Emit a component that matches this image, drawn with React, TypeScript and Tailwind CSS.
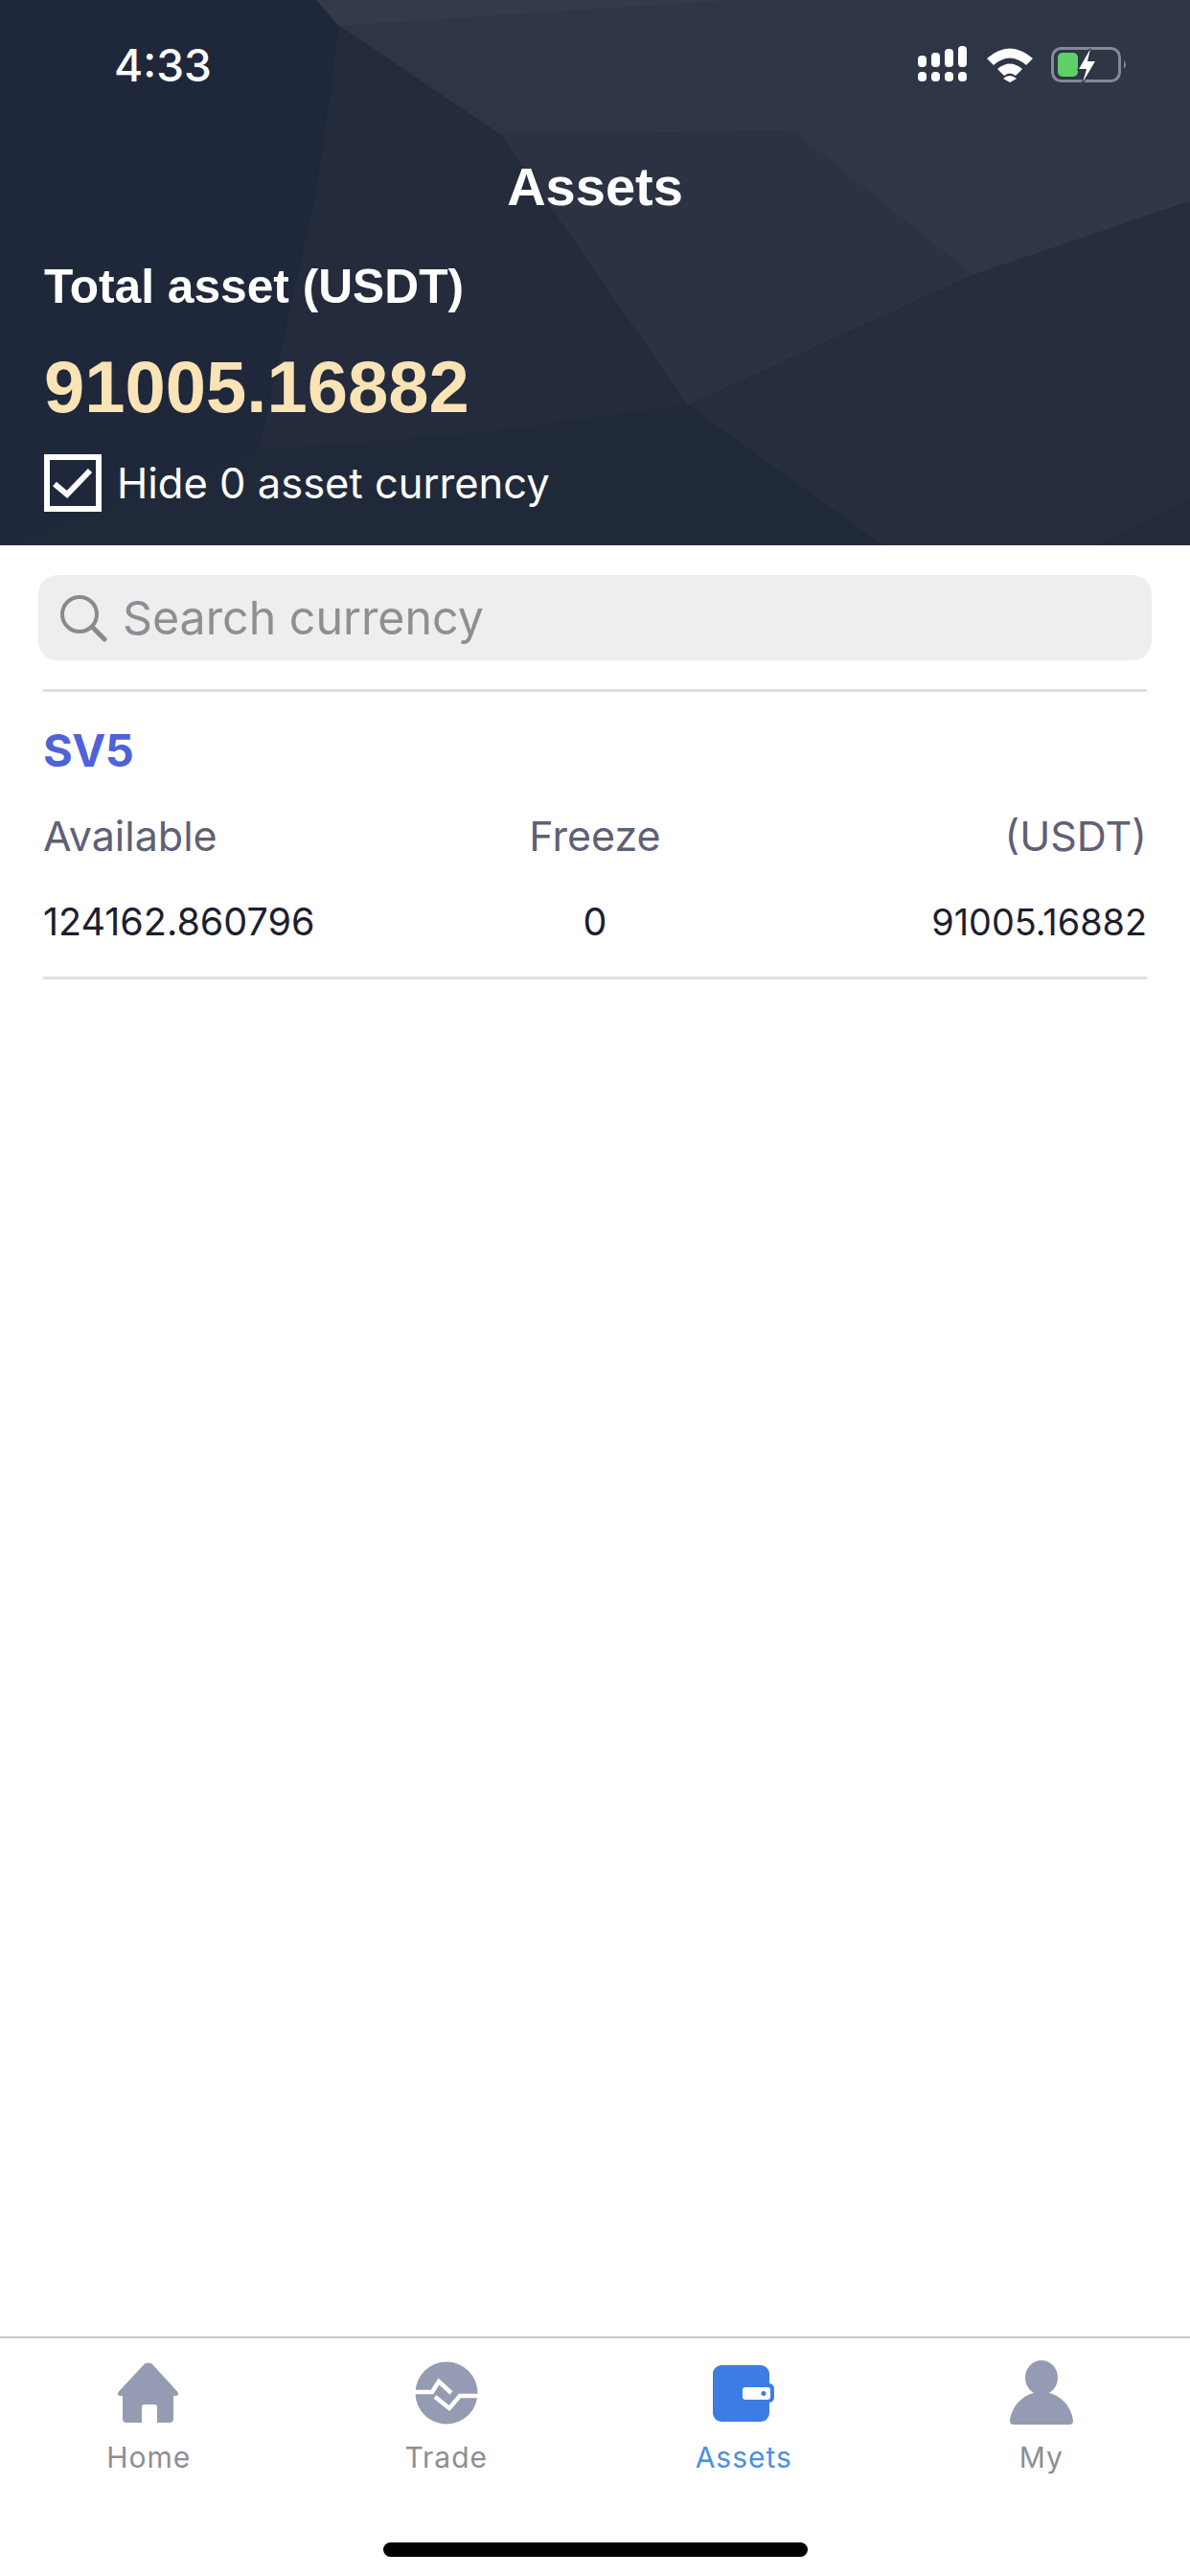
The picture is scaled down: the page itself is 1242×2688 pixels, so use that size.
// App.tsx
import React from 'react';

const FONT = 'font-[Inter,"Noto_Sans",sans-serif]';
const BOLD = 'font-["Liberation_Sans",Arial,sans-serif] font-bold';

// Faceted backdrop of the header
const HeaderFacets = () => (
  <svg className="absolute inset-0 h-full w-full" viewBox="0 0 1242 569" preserveAspectRatio="none">
    <polygon points="0,0 330,0 354,27 522,140 718,423 500,452 270,470 0,569" fill="#1f283a" />
    <polygon points="354,27 522,140 718,423 500,452 270,470 330,200" fill="#232b3c" />
    <polygon points="330,0 1242,0 1242,210 1015,287 829,137 522,140 354,27" fill="#2e3545" />
    <polygon points="330,0 763,0 354,27" fill="#333a4a" />
    <polygon points="823,133 1242,0 1242,210 1015,287" fill="#2f3646" />
    <polygon points="522,140 829,137 1015,287 718,423" fill="#2b3242" />
    <polygon points="1015,287 1242,210 1242,520 1144,569 921,569 718,423" fill="#262d3d" />
    <polygon points="1144,569 1242,520 1242,569" fill="#232b3b" />
    <polygon points="0,569 921,569 718,423 500,452 270,470" fill="#20293a" />
  </svg>
);

const StatusIcons = () => (
  <svg width="222" height="44" viewBox="0 0 222 44" className="block">
    <g fill="#fff">
      <rect x="2" y="10" width="9" height="12" rx="4" />
      <rect x="16" y="7" width="9" height="15" rx="4" />
      <rect x="30" y="3" width="9" height="19" rx="4" />
      <rect x="44" y="0" width="9" height="22" rx="4" />
      <rect x="2" y="27" width="9" height="10" rx="4" />
      <rect x="16" y="27" width="9" height="10" rx="4" />
      <rect x="30" y="27" width="9" height="10" rx="4" />
      <rect x="44" y="27" width="9" height="10" rx="4" />
      <path d="M74 13 Q98 -8 122 13 L115 20 Q98 5 81 20 Z" />
      <path d="M85 24 Q98 13 111 24 L104 31 Q98 26 92 31 Z" />
      <path d="M91 34 Q98 28 105 34 L98 38 Z" />
    </g>
    <rect x="142.5" y="2.5" width="70" height="34" rx="9" fill="none" stroke="#858a96" strokeWidth="3" />
    <rect x="148" y="7" width="21" height="25" rx="5" fill="#5fd068" />
    <path d="M217 15 Q221 19.5 217 24 Z" fill="#858a96" />
    <path d="M182 3 L170 24 L178 24 L174 38 L187 16 L179 16 Z" fill="#fff" stroke="#2b3243" strokeWidth="2.5" paintOrder="stroke" />
  </svg>
);

const HomeIcon = () => (
  <svg width="64" height="64" viewBox="0 0 64 64">
    <path
      d="M28 1.5 Q32 -0.5 35.5 1.5 L62.5 31 Q64 35 60 35 L58 35 L58 59 Q58 63 54 63 L41 63 L41 47 Q41 44 38 44 L28 44 Q25 44 25 47 L25 63 L9 63 Q5 63 5 59 L5 35 L3 35 Q-1 35 0.5 31 Z"
      fill="#959bb2"
    />
  </svg>
);

const TradeIcon = () => (
  <svg width="66" height="66" viewBox="0 0 66 66">
    <circle cx="33" cy="33" r="32.5" fill="#959bb2" />
    <path d="M0 32 H18 L25 21 L38 33" fill="none" stroke="#fff" strokeWidth="4.5" />
    <path d="M21 37 L36 49 L47 36 H66" fill="none" stroke="#fff" strokeWidth="4.5" />
  </svg>
);

const WalletIcon = () => (
  <svg width="66" height="59" viewBox="0 0 66 59">
    <rect x="1" y="0" width="59" height="59" rx="9" fill="#3b7de4" />
    <rect x="54" y="19" width="11" height="20" rx="5.5" fill="#3b7de4" />
    <rect x="32" y="23" width="29" height="13" rx="3" fill="#fff" />
    <circle cx="54" cy="29.5" r="2.5" fill="#3b7de4" />
  </svg>
);

const UserIcon = () => (
  <svg width="68" height="68" viewBox="0 0 68 68">
    <ellipse cx="34" cy="18" rx="17" ry="18" fill="#959bb2" />
    <path d="M1 63 C3 46 17 33 34 33 C51 33 65 46 67 63 Q67 67 63 67 L5 67 Q1 67 1 63 Z" fill="#959bb2" />
  </svg>
);

const tabs = [
  { label: 'Home', icon: <HomeIcon />, active: false },
  { label: 'Trade', icon: <TradeIcon />, active: false },
  { label: 'Assets', icon: <WalletIcon />, active: true },
  { label: 'My', icon: <UserIcon />, active: false },
];

export default function App() {
  return (
    <div className={`flex h-[2688px] w-[1242px] flex-col overflow-hidden bg-white ${FONT}`}>
      {/* Header */}
      <header className="relative h-[569px] shrink-0 overflow-hidden bg-[#222a3a] text-white">
        <HeaderFacets />
        <div className="relative flex h-full flex-col">
          <div className="flex h-[134px] items-start justify-between pl-[119px] pr-[64px] pt-[42px]">
            <span className="text-[46px] font-medium leading-[52px]">4:33</span>
            <div className="pt-[6px]">
              <StatusIcons />
            </div>
          </div>
          <h1 className={`mt-[31px] h-[60px] text-center text-[56px] leading-[60px] ${BOLD}`}>Assets</h1>
          <div className="px-[46px]">
            <p className={`mt-[44px] text-[49.7px] leading-[60px] ${BOLD}`}>Total asset (USDT)</p>
            <p className={`mt-[33px] text-[76px] leading-[84px] text-[#fae3b4] ${BOLD}`}>91005.16882</p>
            <label className="mt-[28px] flex items-center gap-[16px]">
              <span className="flex h-[60px] w-[60px] items-center justify-center border-[6px] border-white">
                <svg width="44" height="38" viewBox="0 0 44 38">
                  <path d="M3 20 L16 31 L40 6" fill="none" stroke="#fff" strokeWidth="6" />
                </svg>
              </span>
              <span className="text-[43.5px] leading-[60px]">Hide 0 asset currency</span>
            </label>
          </div>
        </div>
      </header>

      {/* Search */}
      <div className="px-[40px] pt-[31px]">
        <div className="flex h-[89px] items-center gap-[16px] rounded-[20px] bg-[#eeeef0] pl-[22px]">
          <svg width="50" height="50" viewBox="0 0 50 50">
            <circle cx="21" cy="21" r="18" fill="none" stroke="#8a8a8e" strokeWidth="4" />
            <path d="M34 34 L47 47" stroke="#8a8a8e" strokeWidth="5" strokeLinecap="round" />
          </svg>
          <span className="text-[48.3px] leading-[60px] text-[#8e8e93]">Search currency</span>
        </div>
      </div>

      {/* Currency row */}
      <section className="mx-[45px] mt-[30px] border-y-[3px] border-[#dfdfe2]">
        <h2 className="mt-[31px] text-[47px] font-bold leading-[60px] tracking-[-0.5px] text-[#4f62d8]">SV5</h2>
        <div className="mt-[31px] grid grid-cols-3 text-[43px] leading-[56px] text-[#5e6076]">
          <span>Available</span>
          <span className="text-center">Freeze</span>
          <span className="text-right">(USDT)</span>
        </div>
        <div className="mt-[34px] mb-[29px] grid grid-cols-3 text-[39.5px] leading-[56px] text-[#1d1e30]">
          <span>124162.860796</span>
          <span className="text-center">0</span>
          <span className="text-right text-[37.8px]">91005.16882</span>
        </div>
      </section>

      <div className="flex-1" />

      {/* Tab bar */}
      <nav className="h-[250px] shrink-0 border-t-2 border-[#c6c6c8]">
        <div className="grid grid-cols-4 pt-[22px]">
          {tabs.map((tab) => (
            <div key={tab.label} className="flex flex-col items-center">
              <div className="flex h-[70px] items-center justify-center">{tab.icon}</div>
              <span
                className={`mt-[14px] text-[30px] leading-[36px] tracking-[1px] ${
                  tab.active ? 'text-[#4a90e2]' : 'text-[#8e8e93]'
                }`}
              >
                {tab.label}
              </span>
            </div>
          ))}
        </div>
        <div className="mx-auto mt-[71px] h-[15px] w-[443px] rounded-full bg-black" />
      </nav>
    </div>
  );
}
